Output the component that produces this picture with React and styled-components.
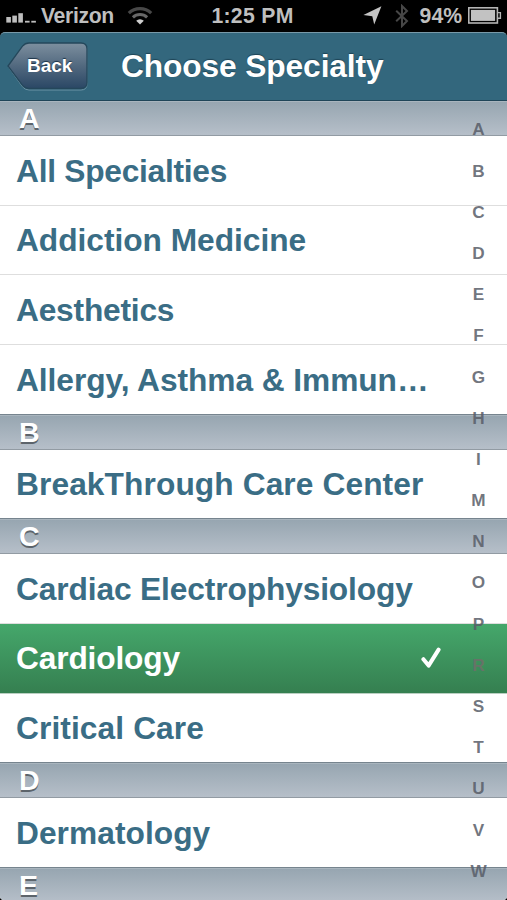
import React from 'react';
import styled, { createGlobalStyle, css } from 'styled-components';

const GlobalStyle = createGlobalStyle`
  * {
    box-sizing: border-box;
  }

  body {
    margin: 0;
    background: #000000;
    font-family: 'Liberation Sans', Arial, sans-serif;
  }
`;

// `tracking` is the letter spacing of the label, in pixels
const sections = [
  {
    letter: 'A',
    items: [
      { name: 'All Specialties', tracking: -0.25 },
      { name: 'Addiction Medicine', tracking: -0.02 },
      { name: 'Aesthetics', tracking: -0.2 },
      { name: 'Allergy, Asthma & Immun…', tracking: -0.05 }
    ]
  },
  { letter: 'B', items: [{ name: 'BreakThrough Care Center', tracking: 0.1 }] },
  {
    letter: 'C',
    items: [
      { name: 'Cardiac Electrophysiology', tracking: -0.12 },
      { name: 'Cardiology', tracking: -0.15, selected: true },
      { name: 'Critical Care', tracking: 0.1 }
    ]
  },
  { letter: 'D', items: [{ name: 'Dermatology', tracking: 0.05 }] },
  { letter: 'E', items: [] }
];

const indexLetters = 'ABCDEFGHIMNOPRSTUVW'.split('');

const SignalIcon = () => (
  <svg width="32" height="12" viewBox="0 0 32 12" fill="#bdbdbd">
    <rect x="0.3" y="6" width="4.6" height="5.6" />
    <rect x="6.3" y="4.6" width="4.6" height="7" />
    <rect x="12.3" y="2.2" width="4.6" height="9.4" />
    <rect x="19" y="9.8" width="4.6" height="1.8" />
    <rect x="25.3" y="9.8" width="4.6" height="1.8" />
  </svg>
);

const WifiIcon = () => (
  <svg width="26" height="20" viewBox="0 0 26 20" fill="none">
    <path d="M1.8 7.2A16 16 0 0 1 24.2 7.2" stroke="#484848" strokeWidth="3.2" />
    <path d="M5.9 11.3A10.2 10.2 0 0 1 20.1 11.3" stroke="#686868" strokeWidth="3" />
    <path d="M9.2 14.7A5.5 5.5 0 0 1 16.8 14.7L13 18.6Z" fill="#d0d0d0" />
  </svg>
);

const LocationIcon = () => (
  <svg width="19" height="19" viewBox="0 0 19 19">
    <path d="M18.4 0.3L11.2 18.4L9.3 10.2L0.4 8.9Z" fill="#c4c4c4" />
  </svg>
);

const BluetoothIcon = () => (
  <svg width="14" height="24" viewBox="0 0 14 24" fill="none">
    <path
      d="M1.2 6.8L12 17L7 22V2L12 7L1.2 17.2"
      stroke="#474747"
      strokeWidth="2"
    />
  </svg>
);

const BatteryIcon = () => (
  <svg width="34" height="17" viewBox="0 0 34 17">
    <rect x="0.8" y="0.8" width="28.6" height="15.2" fill="none" stroke="#b5b5b5" strokeWidth="1.6" />
    <rect x="2.9" y="2.9" width="24.2" height="11" fill="#c2c2c2" />
    <path d="M29.5 5.6H32.4V11.2H29.5" fill="none" stroke="#b5b5b5" strokeWidth="1.4" />
  </svg>
);

const CheckIcon = () => (
  <svg width="21" height="22" viewBox="0 0 21 22" fill="none">
    <path
      d="M2.4 12.2L7.6 18.6L17.6 2.6"
      stroke="#ffffff"
      strokeWidth="4"
      strokeLinecap="round"
      strokeLinejoin="round"
    />
  </svg>
);

const BackShape = () => (
  <svg width="82" height="50" viewBox="0 0 82 50">
    <defs>
      <linearGradient id="back" x1="0" y1="0" x2="0" y2="1">
        <stop offset="0" stopColor="#7d8f9f" />
        <stop offset="0.5" stopColor="#52697f" />
        <stop offset="1" stopColor="#2a4765" />
      </linearGradient>
    </defs>
    <path
      d="M1.5 25L15.5 5.2Q18.2 2 22 2H74Q80 2 80 8V42Q80 48 74 48H22Q18.2 48 15.5 44.8Z"
      fill="none"
      stroke="#6d93a5"
      strokeWidth="1"
    />
    <path
      d="M1 24L15.5 4.2Q18.2 1 22 1H74Q80 1 80 7V40.5Q80 46.5 74 46.5H22Q18.2 46.5 15.5 43.3Z"
      fill="url(#back)"
      stroke="#24475b"
      strokeWidth="1.3"
    />
  </svg>
);

const SpecialtyRow = ({ name, tracking, selected }) => (
  <Row $selected={selected}>
    <Label $tracking={tracking}>{name}</Label>
    {selected && <CheckIcon />}
  </Row>
);

const App = () => (
  <Screen>
    <GlobalStyle />
    <StatusBar>
      <Carrier>
        <SignalIcon />
        <StatusText $tracking={-0.35}>Verizon</StatusText>
        <WifiIcon />
      </Carrier>
      <Clock $tracking={0.3}>1:25 PM</Clock>
      <Indicators>
        <LocationIcon />
        <BluetoothIcon />
        <StatusText $tracking={0}>94%</StatusText>
        <BatteryIcon />
      </Indicators>
    </StatusBar>
    <NavBar>
      <BackButton>
        <BackShape />
        <BackLabel>Back</BackLabel>
      </BackButton>
      <Title>Choose Specialty</Title>
    </NavBar>
    <List>
      {sections.map(({ letter, items }) => (
        <section key={letter}>
          <SectionHeader>{letter}</SectionHeader>
          {items.map(item => (
            <SpecialtyRow key={item.name} {...item} />
          ))}
        </section>
      ))}
      <Index>
        {indexLetters.map(letter => (
          <IndexLetter key={letter} $onSelected={letter === 'R'}>
            {letter}
          </IndexLetter>
        ))}
      </Index>
    </List>
  </Screen>
);

const Screen = styled.div`
  display: flex;
  flex-direction: column;

  width: 507px;
  height: 900px;
  overflow: hidden;

  background: #000000;
  border-radius: 0 0 4px 4px;
`;

const StatusBar = styled.div`
  flex: none;
  display: grid;
  grid-template-columns: 1fr auto 1fr;
  align-items: center;

  height: 32px;
  padding: 0 5px 0 6px;
`;

const Carrier = styled.div`
  display: flex;
  align-items: center;

  svg:first-child {
    margin: 2px 3px 0 0;
  }

  svg:last-child {
    margin: -1px 0 0 13px;
  }
`;

const Indicators = styled.div`
  display: flex;
  align-items: center;
  justify-content: flex-end;

  svg:first-child {
    margin-top: -2px;
  }

  svg:nth-child(2) {
    margin: -1px 11px 0 13px;
  }

  svg:last-child {
    margin: -2px 0 0 6px;
  }
`;

const StatusText = styled.span`
  font-size: 21.2px;
  font-weight: bold;
  line-height: 32px;
  letter-spacing: ${({ $tracking }) => $tracking}px;
  color: #bfbfbf;
`;

const Clock = styled(StatusText)`
  margin-right: 3px;
`;

const NavBar = styled.header`
  flex: none;
  display: flex;
  align-items: center;

  height: 69px;
  padding-left: 7px;

  background: #33677d;
  border-top: 1px solid #7899a8;
  border-bottom: 1px solid #1f4558;
  border-radius: 5px 5px 0 0;
`;

const BackButton = styled.div`
  display: grid;
  align-items: center;

  > * {
    grid-area: 1 / 1;
  }
`;

const BackLabel = styled.span`
  padding: 0 0 2px 20px;

  font-size: 19px;
  font-weight: bold;
  color: #ffffff;
  text-shadow: 0 -1px 1px #1c3348;
`;

const Title = styled.h1`
  margin: 0 0 1px 32px;

  font-size: 31.7px;
  font-weight: bold;
  letter-spacing: -0.1px;
  white-space: nowrap;
  color: #ffffff;
  text-shadow: 0 -1.5px 1px #1e4456;
`;

const List = styled.main`
  position: relative;
  flex: 1;
  min-height: 0;
  overflow: hidden;

  background: #ffffff;
`;

const SectionHeader = styled.h2`
  height: 35.85px;
  margin: -1px 0 0;
  padding: 2px 0 0 19px;

  font-size: 28.5px;
  font-weight: bold;
  line-height: 30px;
  color: #ffffff;
  text-shadow: 0 1.5px 0.5px #5c646b;

  background: linear-gradient(#96a5b0, #b6bfc9);
  border-top: 1px solid #76848e;
  border-bottom: 1px solid #929ba3;
  box-shadow: inset 0 1px #a9b5be;

  section:first-child > & {
    height: 35px;
    margin-top: 0;
    border-top: 0;
  }
`;

const Row = styled.div`
  display: flex;
  align-items: center;
  justify-content: space-between;

  height: 69.7px;
  padding: 1.4px 65px 0 16px;

  color: #3a6d85;
  background: #ffffff;
  border-bottom: 1px solid #dedede;

  svg {
    margin-bottom: 2px;
  }

  ${({ $selected }) =>
    $selected &&
    css`
      color: #ffffff;
      background: linear-gradient(#45a76b, #357f50);
      border-bottom-color: #b9cfc1;
    `}
`;

const Label = styled.span`
  font-size: 31.7px;
  font-weight: bold;
  letter-spacing: ${({ $tracking }) => $tracking}px;
  white-space: nowrap;
`;

const Index = styled.nav`
  position: absolute;
  top: 8.4px;
  right: 10px;

  display: flex;
  flex-direction: column;
  width: 37px;
`;

const IndexLetter = styled.span`
  height: 41.2px;

  font-size: 17.2px;
  font-weight: bold;
  line-height: 41.2px;
  text-align: center;
  color: ${({ $onSelected }) =>
    $onSelected ? '#667368' : 'rgba(88, 93, 104, 0.85)'};
`;

export default App;
